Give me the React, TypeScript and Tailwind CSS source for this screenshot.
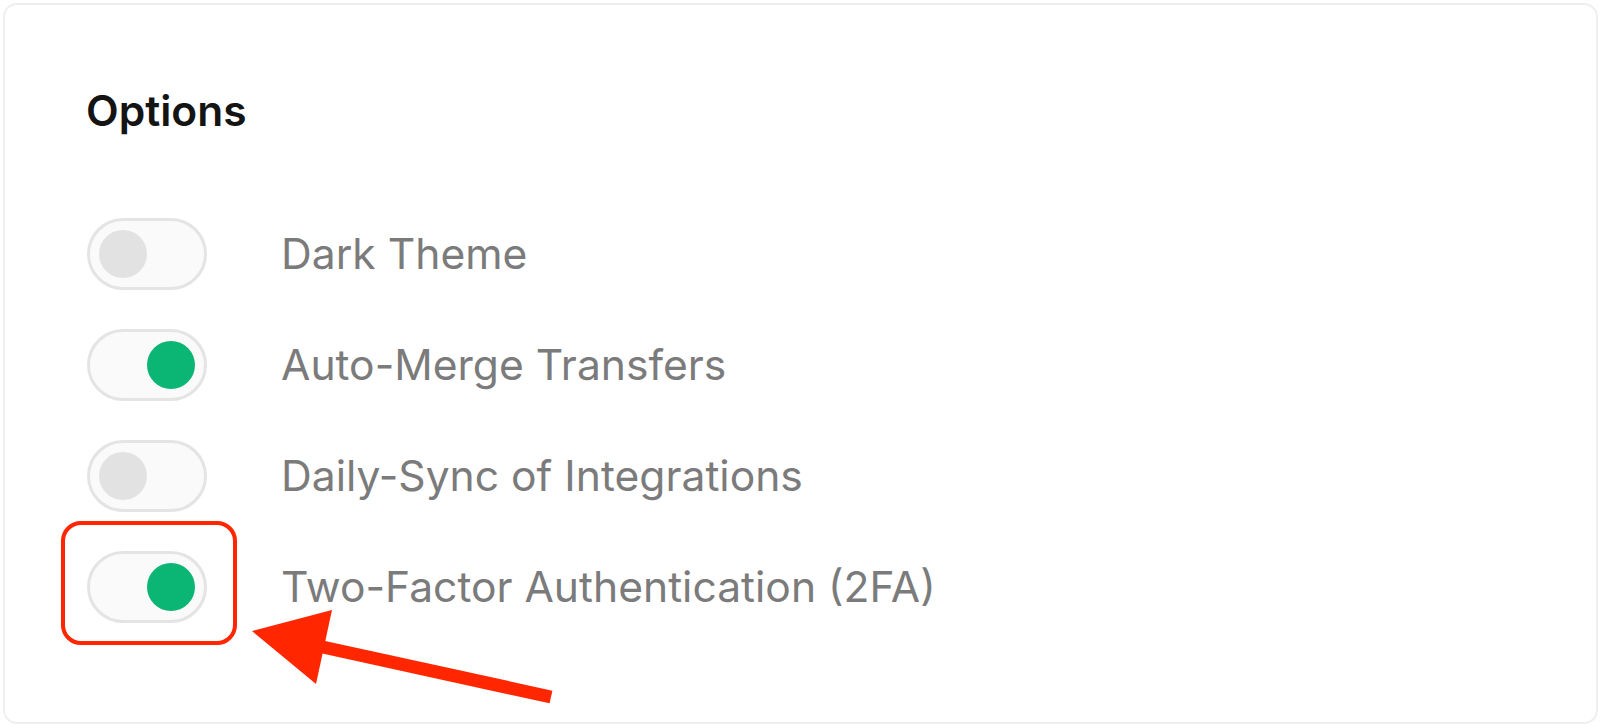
import { useState } from "react";

const options = [
  { id: "dark", label: "Dark Theme", on: false },
  { id: "merge", label: "Auto-Merge Transfers", on: true },
  { id: "sync", label: "Daily-Sync of Integrations", on: false },
  { id: "2fa", label: "Two-Factor Authentication (2FA)", on: true, marked: true },
];

function Toggle({ on, onClick }: { on: boolean; onClick: () => void }) {
  return (
    <button
      type="button"
      onClick={onClick}
      className={`flex h-[72px] w-[120px] shrink-0 items-center rounded-full border-[3px] border-[#e4e4e4] bg-[#fafafa] px-[9px] ${
        on ? "justify-end" : "justify-start"
      }`}
    >
      <span className={`block h-[48px] w-[48px] rounded-full ${on ? "bg-[#0bb574]" : "bg-[#e2e2e2]"}`} />
    </button>
  );
}

export default function App() {
  const [state, setState] = useState<Record<string, boolean>>(
    Object.fromEntries(options.map((o) => [o.id, o.on]))
  );

  return (
    <div className="relative h-[727px] w-full bg-white p-[3px]" style={{ fontFamily: "Inter, 'Noto Sans', sans-serif" }}>
      <div className="h-[721px] rounded-[14px] border-2 border-[#efefef] bg-white pl-[82px] pt-[82px]">
        <h2 className="-ml-[1px] text-[42.5px] font-semibold leading-[48px] text-[#141414]">Options</h2>
        <div className="mt-[83px] flex flex-col gap-[39px]">
          {options.map((o) => (
            <div key={o.id} className="flex items-center gap-[75px]">
              <div className="relative">
                <Toggle on={state[o.id]} onClick={() => setState((s) => ({ ...s, [o.id]: !s[o.id] }))} />
                {o.marked && (
                  <div className="pointer-events-none absolute -left-[26px] -top-[30px] h-[124px] w-[176px] rounded-[20px] border-4 border-[#ff2600]" />
                )}
              </div>
              <span className="-ml-[1px] text-[42.6px] leading-[50px] text-[#7b7b7b]">{o.label}</span>
            </div>
          ))}
        </div>
      </div>

      {/* annotation arrow */}
      <svg className="pointer-events-none absolute left-0 top-0" width="1601" height="727">
        <line x1="318" y1="646" x2="551" y2="697" stroke="#ff2600" strokeWidth="13" />
        <polygon points="252,631 332,610 316,684" fill="#ff2600" />
      </svg>
    </div>
  );
}
